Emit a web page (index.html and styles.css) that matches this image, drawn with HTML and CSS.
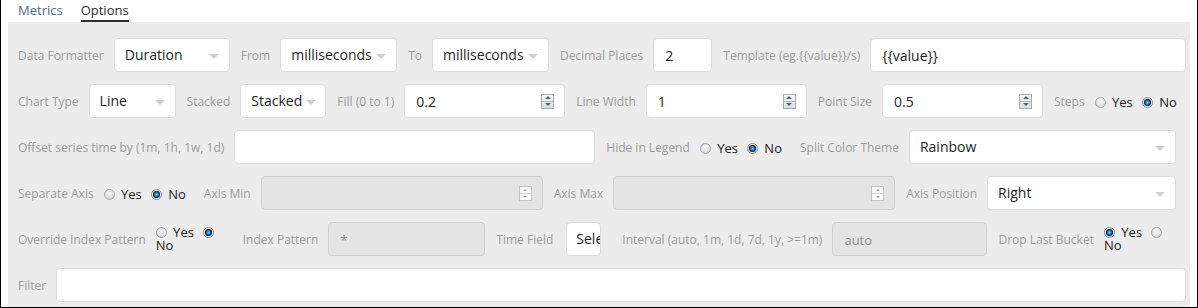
FILE: index.html
```html
<!DOCTYPE html>
<html>
<head>
<meta charset="utf-8">
<link rel="stylesheet" href="styles.css">
</head>
<body>
<div class="frame">
  <div class="tabs">
    <div class="tab">Metrics</div>
    <div class="tab tab--active">Options</div>
  </div>
  <div class="panel">
    <div class="row">
      <div class="label">Data Formatter</div>
      <div class="field select w-116"><span class="value">Duration</span><span class="caret"></span></div>
      <div class="label">From</div>
      <div class="field select w-117"><span class="value">milliseconds</span><span class="caret"></span></div>
      <div class="label">To</div>
      <div class="field select w-117"><span class="value">milliseconds</span><span class="caret"></span></div>
      <div class="label">Decimal Places</div>
      <div class="field text w-59"><span class="value">2</span></div>
      <div class="label">Template (eg.{{value}}/s)</div>
      <div class="field text grow last"><span class="value">{{value}}</span></div>
    </div>

    <div class="row">
      <div class="label">Chart Type</div>
      <div class="field select w-87"><span class="value">Line</span><span class="caret"></span></div>
      <div class="label">Stacked</div>
      <div class="field select w-86"><span class="value">Stacked</span><span class="caret"></span></div>
      <div class="label">Fill (0 to 1)</div>
      <div class="field text w-161"><span class="value">0.2</span><span class="spin"><span class="spin__up"></span><span class="spin__down"></span></span></div>
      <div class="label">Line Width</div>
      <div class="field text w-161"><span class="value">1</span><span class="spin"><span class="spin__up"></span><span class="spin__down"></span></span></div>
      <div class="label">Point Size</div>
      <div class="field text w-161"><span class="value">0.5</span><span class="spin"><span class="spin__up"></span><span class="spin__down"></span></span></div>
      <div class="label">Steps</div>
      <div class="radios"><label class="radio"><input type="radio" class="radio__input" name="steps"> Yes</label><label class="radio"><input type="radio" class="radio__input" name="steps" checked> No</label></div>
    </div>

    <div class="row">
      <div class="label">Offset series time by (1m, 1h, 1w, 1d)</div>
      <div class="field text w-361"><span class="value"></span></div>
      <div class="label">Hide in Legend</div>
      <div class="radios"><label class="radio"><input type="radio" class="radio__input" name="hide"> Yes</label><label class="radio"><input type="radio" class="radio__input" name="hide" checked> No</label></div>
      <div class="label">Split Color Theme</div>
      <div class="field select grow end"><span class="value">Rainbow</span><span class="caret"></span></div>
    </div>

    <div class="row">
      <div class="label">Separate Axis</div>
      <div class="radios"><label class="radio"><input type="radio" class="radio__input" name="sep"> Yes</label><label class="radio"><input type="radio" class="radio__input" name="sep" checked> No</label></div>
      <div class="label">Axis Min</div>
      <div class="field text disabled w-282"><span class="value"></span><span class="spin spin--off"><span class="spin__up"></span><span class="spin__down"></span></span></div>
      <div class="label">Axis Max</div>
      <div class="field text disabled w-282"><span class="value"></span><span class="spin spin--off"><span class="spin__up"></span><span class="spin__down"></span></span></div>
      <div class="label">Axis Position</div>
      <div class="field select grow end"><span class="value">Right</span><span class="caret"></span></div>
    </div>

    <div class="row">
      <div class="label">Override Index Pattern</div>
      <div class="radios radios--wrap w-70"><label class="radio"><input type="radio" class="radio__input" name="ovr"> Yes</label><label class="radio"><input type="radio" class="radio__input" name="ovr" checked> No</label></div>
      <div class="label">Index Pattern</div>
      <div class="field text disabled w-157"><span class="value">*</span></div>
      <div class="label label--wide">Time Field</div>
      <div class="field select clip w-35"><span class="value">Select...</span></div>
      <div class="label">Interval (auto, 1m, 1d, 7d, 1y, &gt;=1m)</div>
      <div class="field text disabled w-155"><span class="value">auto</span></div>
      <div class="label">Drop Last Bucket</div>
      <div class="radios radios--wrap w-72"><label class="radio"><input type="radio" class="radio__input" name="drop" checked> Yes</label><label class="radio"><input type="radio" class="radio__input" name="drop"> No</label></div>
    </div>

    <div class="row">
      <div class="label">Filter</div>
      <div class="field text grow last"><span class="value"></span></div>
    </div>
  </div>
</div>
</body>
</html>
```

FILE: styles.css
```css
* { box-sizing: border-box; }
html, body { margin: 0; padding: 0; }
body {
  width: 1198px;
  height: 308px;
  overflow: hidden;
  background: #fff;
  font-family: "Open Sans", "Noto Sans", sans-serif;
}
.frame {
  height: 308px;
  border: 1px solid #000;
  border-top: none;
  display: flex;
  flex-direction: column;
}
.tabs {
  height: 22px;
  display: flex;
  padding-left: 17px;
  flex-shrink: 0;
}
.tab {
  font-size: 13px;
  line-height: 20px;
  color: #5a6978;
  margin-right: 18px;
  border-bottom: 2px solid transparent;
}
.tab--active {
  color: #2d2d2d;
  border-bottom-color: #2d2d2d;
}
.panel {
  flex: 1;
  margin: 0 7px 0 7px;
  background: #ececec;
  padding: 16px 4px 4px 10px;
}
.row {
  display: flex;
  align-items: center;
  height: 34px;
  margin-bottom: 12px;
}
.row:last-child { margin-bottom: 0; }
.label {
  font-size: 12px;
  color: #9b9b9b;
  margin-right: 10px;
  white-space: nowrap;
  flex-shrink: 0;
}
.label--wide { margin-right: 13px; }
.field {
  height: 34px;
  background: #fff;
  border: 1px solid #dcdcdc;
  border-radius: 4px;
  display: flex;
  align-items: center;
  margin-right: 11px;
  font-size: 14px;
  color: #1e1e1e;
  padding-left: 10px;
  flex-shrink: 0;
  white-space: nowrap;
}
.field.text { padding-left: 11px; }
.field .value { flex: 1; line-height: 20px; }
.field.text .value { padding-top: 2px; }
.field.grow { flex: 1 1 auto; }
.field.last { margin-right: 0; }
.field.end { margin-right: 10px; }
.field.disabled {
  background: #e4e4e4;
  border-color: #cfcfcf;
  color: #8c8c8c;
  font-size: 13px;
}
.field.clip { overflow: hidden; margin-right: 21px; padding-left: 9px; }
.field.clip .value { flex: 1; min-width: 0; overflow: hidden; }

.caret {
  width: 0;
  height: 0;
  border-left: 5px solid transparent;
  border-right: 5px solid transparent;
  border-top: 5px solid #cfcfcf;
  margin: 2px 10px 0 4px;
  flex-shrink: 0;
}

.spin {
  width: 13px;
  height: 15px;
  margin-right: 10px;
  border: 1px solid #a9a9a9;
  display: flex;
  flex-direction: column;
  background: linear-gradient(#f6f6f6, #dedede);
  flex-shrink: 0;
}
.spin__up, .spin__down {
  flex: 1;
  display: flex;
  align-items: center;
  justify-content: center;
}
.spin__up { border-bottom: 1px solid #b5b5b5; }
.spin__up::after {
  content: "";
  border-left: 3px solid transparent;
  border-right: 3px solid transparent;
  border-bottom: 3px solid #4a5c94;
}
.spin__down::after {
  content: "";
  border-left: 3px solid transparent;
  border-right: 3px solid transparent;
  border-top: 3px solid #4a5c94;
}
.spin--off {
  background: #fafafa;
  border-color: #c4c4c4;
}
.spin--off .spin__up { border-bottom-color: #d0d0d0; }
.spin--off .spin__up::after { border-bottom-color: #9a9a9a; border-left-width: 2.5px; border-right-width: 2.5px; border-bottom-width: 2.5px; }
.spin--off .spin__down::after { border-top-color: #9a9a9a; border-left-width: 2.5px; border-right-width: 2.5px; border-top-width: 2.5px; }

.radios {
  font-size: 13px;
  color: #222;
  white-space: nowrap;
  margin-right: 18px;
  flex-shrink: 0;
  padding-top: 2px;
}
.radios--wrap {
  white-space: normal;
  line-height: 13px;
  margin-right: 11px;
  padding-top: 0;
}
.w-70 { width: 76px; }
.w-72 { width: 80px; margin-right: 0; }
.radio { margin-right: 9px; }
.radio:last-child { margin-right: 0; }
.radio__input {
  -webkit-appearance: none;
  appearance: none;
  width: 11px;
  height: 11px;
  margin: 0 3px 0 0;
  border-radius: 50%;
  border: 1px solid #a6a6a6;
  background: radial-gradient(circle at 50% 40%, #f7f7f7 0, #e6e6e6 45%, #c9c9c9 100%);
  vertical-align: -1px;
}
.radio__input:checked {
  border-color: #8a8a8a;
  background: radial-gradient(circle at 50% 50%, #7fd0ff 0, #1e88d0 1.6px, #123a66 2.8px, #1a2f4d 3.4px, #e2e2e2 3.9px, #eeeeee 100%);
}

.w-116 { width: 116px; }
.w-117 { width: 117px; }
.w-59 { width: 59px; }
.w-87 { width: 87px; }
.w-86 { width: 86px; }
.w-161 { width: 161px; }
.w-361 { width: 361px; }
.w-282 { width: 282px; }
.w-157 { width: 157px; }
.w-35 { width: 35px; }
.w-155 { width: 155px; }
```
